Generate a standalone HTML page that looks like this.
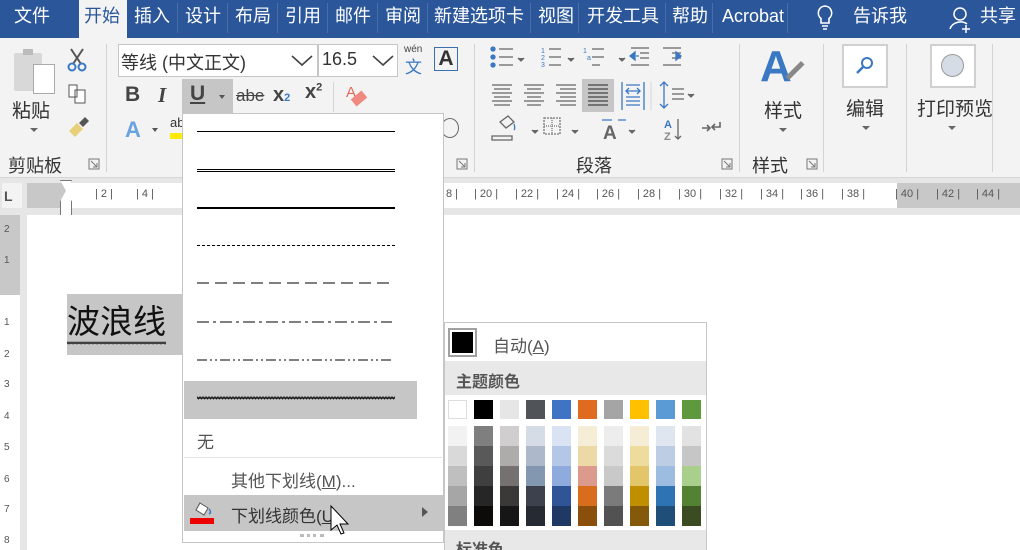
<!DOCTYPE html>
<html style="overflow:hidden;width:1020px;height:550px"><head><meta charset="utf-8"><style>
*{margin:0;padding:0;box-sizing:border-box}
body{width:1020px;height:550px;overflow:hidden;position:relative;background:#e6e6e6;font-family:"Liberation Sans","Noto Sans CJK SC",sans-serif;color:#444}
.a{position:absolute}
.tab{position:absolute;top:0;height:38px;line-height:32px;color:#fff;font-size:18px}
.sep{position:absolute;top:3px;width:1px;height:30px;background:#4a6fa8}
.vs{position:absolute;width:1px;background:#d4d4d4}
.lbl{position:absolute;font-size:18px;color:#333}
.dl{position:absolute;left:197px;width:198px}
.sw{position:absolute;width:19px}
.rn{position:absolute;top:188px;font-size:11px;color:#555}
.vn{position:absolute;left:4px;font-size:10px;color:#555}
</style></head><body>
<svg width="0" height="0" style="position:absolute"><defs><pattern id="wv" width="4" height="6" patternUnits="userSpaceOnUse"><path d="M0 4L1 2 2 4 3 2 4 4" fill="none" stroke="#000" stroke-width="0.8"/></pattern><pattern id="wv2" width="3" height="6" patternUnits="userSpaceOnUse"><path d="M0 4L0.75 2 1.5 4 2.25 2 3 4" fill="none" stroke="#000" stroke-width="0.7"/></pattern></defs></svg>
<!-- title tabs -->
<div class="a" style="left:0;top:0;width:1020px;height:38px;background:#2b579a"></div>
<div class="a" style="left:79px;top:0;width:48px;height:38px;background:#f3f3f3"></div>
<div class="tab" style="left:14px">文件</div>
<div class="tab" style="left:84px;color:#2b579a">开始</div>
<div class="tab" style="left:134px">插入</div>
<div class="tab" style="left:185px">设计</div>
<div class="tab" style="left:235px">布局</div>
<div class="tab" style="left:285px">引用</div>
<div class="tab" style="left:335px">邮件</div>
<div class="tab" style="left:385px">审阅</div>
<div class="tab" style="left:434px">新建选项卡</div>
<div class="tab" style="left:538px">视图</div>
<div class="tab" style="left:587px">开发工具</div>
<div class="tab" style="left:672px">帮助</div>
<div class="tab" style="left:722px">Acrobat</div>
<div class="tab" style="left:853px">告诉我</div>
<div class="tab" style="left:980px">共享</div>
<div class="sep" style="left:177px"></div><div class="sep" style="left:227px"></div><div class="sep" style="left:277px"></div><div class="sep" style="left:327px"></div><div class="sep" style="left:377px"></div><div class="sep" style="left:427px"></div><div class="sep" style="left:530px"></div><div class="sep" style="left:578px"></div><div class="sep" style="left:665px"></div><div class="sep" style="left:712px"></div><div class="sep" style="left:787px"></div>
<svg class="a" style="left:814px;top:3px" width="22" height="30"><path d="M11 3a7 7 0 0 0-4 12.5V20h8v-4.5A7 7 0 0 0 11 3zM8 23h6M9 26h4" fill="none" stroke="#fff" stroke-width="1.6"/></svg>
<svg class="a" style="left:948px;top:5px" width="26" height="28"><circle cx="12" cy="9" r="6" fill="none" stroke="#fff" stroke-width="1.5"/><path d="M2 24c2-7 12-9 17-5M18 20v8M14 24h8" fill="none" stroke="#fff" stroke-width="1.5"/></svg>
<!-- ribbon -->
<div class="a" style="left:0;top:38px;width:1020px;height:140px;background:#f3f3f3"></div>
<div class="a" style="left:0;top:177px;width:1020px;height:1px;background:#d6d6d6"></div>
<div class="vs" style="left:106px;top:44px;height:128px"></div>
<div class="vs" style="left:474px;top:44px;height:128px"></div>
<div class="vs" style="left:739px;top:44px;height:128px"></div>
<div class="vs" style="left:823px;top:44px;height:128px"></div>
<div class="vs" style="left:906px;top:44px;height:128px"></div>
<div class="vs" style="left:992px;top:44px;height:128px"></div>
<!-- clipboard -->
<div class="a" style="left:14px;top:53px;width:28px;height:38px;background:#d8d8d8;border-radius:2px"></div>
<div class="a" style="left:23px;top:49px;width:10px;height:6px;background:#bbb"></div>
<div class="a" style="left:33px;top:64px;width:22px;height:30px;background:#fff;border:1px solid #aaa"></div>
<div class="lbl" style="left:12px;top:96px;font-size:19px">粘贴</div>
<div class="a" style="left:30px;top:128px;border:4px solid transparent;border-top:4px solid #666"></div>
<svg class="a" style="left:65px;top:47px" width="24" height="26"><path d="M6 2l10 15M18 2L8 17" stroke="#555" stroke-width="2"/><circle cx="7" cy="20" r="3.5" fill="none" stroke="#3a78c3" stroke-width="2"/><circle cx="17" cy="20" r="3.5" fill="none" stroke="#3a78c3" stroke-width="2"/></svg>
<svg class="a" style="left:67px;top:83px" width="22" height="22"><path d="M2 2h8v12H2zM8 7h10v13H8z" fill="#fff" stroke="#555"/></svg>
<svg class="a" style="left:65px;top:117px" width="26" height="22"><path d="M4 14l8-8 6 6-8 8z" fill="#e8d07a"/><path d="M14 6l6-6 4 4-6 6" fill="#555"/></svg>
<div class="lbl" style="left:8px;top:152px">剪贴板</div>
<svg class="a" style="left:88px;top:158px" width="12" height="12"><path d="M1 1h10v10H1zM3 3l6 6M9 5v4H5" fill="none" stroke="#777"/></svg>
<!-- font -->
<div class="a" style="left:118px;top:44px;width:200px;height:33px;background:#fff;border:1px solid #c6c6c6"></div>
<div class="a" style="left:121px;top:49px;font-size:18px;color:#333">等线 (中文正文)</div>
<svg class="a" style="left:290px;top:54px" width="24" height="14"><path d="M2 2l10 9 10-9" fill="none" stroke="#444" stroke-width="1.6"/></svg>
<div class="a" style="left:318px;top:44px;width:80px;height:33px;background:#fff;border:1px solid #c6c6c6"></div>
<div class="a" style="left:322px;top:49px;font-size:18px;color:#333">16.5</div>
<svg class="a" style="left:371px;top:54px" width="24" height="14"><path d="M2 2l10 9 10-9" fill="none" stroke="#444" stroke-width="1.6"/></svg>
<div class="a" style="left:404px;top:44px;font-size:10px;color:#444">wén</div>
<div class="a" style="left:405px;top:53px;font-size:17px;color:#3a78c3">文</div>
<div class="a" style="left:434px;top:47px;width:24px;height:24px;border:1px solid #3a6fb0;font-size:21px;font-weight:bold;line-height:22px;text-align:center;color:#333">A</div>
<div class="a" style="left:125px;top:83px;font-size:21px;font-weight:bold;color:#444">B</div>
<div class="a" style="left:158px;top:83px;font-size:21px;font-style:italic;font-family:'Liberation Serif',serif;font-weight:bold;color:#444">I</div>
<div class="a" style="left:182px;top:79px;width:51px;height:34px;background:#c6c6c6"></div>
<div class="a" style="left:190px;top:82px;font-size:21px;font-weight:bold;color:#444;text-decoration:underline">U</div>
<div class="a" style="left:219px;top:95px;border:3px solid transparent;border-top:4px solid #555"></div>
<div class="a" style="left:236px;top:86px;font-size:17px;color:#444;text-decoration:line-through">abe</div>
<div class="a" style="left:273px;top:84px;font-size:20px;font-weight:bold;color:#444">x<span style="font-size:11px;color:#3a78c3">2</span></div>
<div class="a" style="left:305px;top:81px;font-size:20px;font-weight:bold;color:#444">x<sup style="font-size:11px">2</sup></div>
<div class="vs" style="left:333px;top:82px;height:30px"></div>
<div class="a" style="left:346px;top:84px;font-size:15px;color:#e06a5a">A</div>
<div class="a" style="left:352px;top:94px;width:14px;height:9px;background:#f08a80;transform:rotate(-40deg)"></div>
<div class="a" style="left:125px;top:117px;font-size:22px;color:#6aa3dd;font-weight:bold">A</div>
<div class="a" style="left:152px;top:128px;border:3px solid transparent;border-top:4px solid #555"></div>
<div class="a" style="left:170px;top:115px;font-size:13px;color:#333">ab</div>
<div class="a" style="left:170px;top:133px;width:12px;height:6px;background:#ffeb00"></div>
<div class="a" style="left:441px;top:118px;width:18px;height:20px;border:1px solid #666;border-radius:50%"></div>
<svg class="a" style="left:456px;top:158px" width="12" height="12"><path d="M1 1h10v10H1zM3 3l6 6M9 5v4H5" fill="none" stroke="#777"/></svg>
<!-- paragraph -->
<svg class="a" style="left:488px;top:44px" width="250" height="105" fill="none" stroke-width="1.3">
<g stroke="#3a78c3" fill="#3a78c3"><circle cx="5" cy="5" r="2"/><circle cx="5" cy="13" r="2"/><circle cx="5" cy="21" r="2"/></g>
<path d="M11 5h14M11 13h14M11 21h14M61 5h12M61 13h12M61 21h12M104 5h12M104 13h12M104 21h8M143 4h18M152 9h9M152 14h9M143 21h18M175 4h18M184 9h9M184 14h9M175 21h18" stroke="#666"/>
<text x="53" y="9" font-size="7" fill="#3a78c3">1</text><text x="53" y="16" font-size="7" fill="#3a78c3">2</text><text x="53" y="23" font-size="7" fill="#3a78c3">3</text>
<text x="95" y="9" font-size="7" fill="#3a78c3">1</text><text x="99" y="16" font-size="7" fill="#3a78c3">a</text>
<path d="M142 12l5-4v8zM148 12h3M193 12l-5-4v8z" fill="#3a78c3" stroke="#3a78c3"/>
<path d="M30 14l3 3 3-3M80 14l3 3 3-3M131 14l3 3 3-3" fill="#666" stroke="#666"/>
<path d="M4 41h20M6 45h16M4 49h20M6 53h16M4 57h20M6 61h16M36 41h20M39 45h14M36 49h20M39 53h14M36 57h20M39 61h14M68 41h20M72 45h16M68 49h20M72 53h16M68 57h20M72 61h16" stroke="#666"/>
<rect x="94" y="35" width="32" height="33" fill="#c6c6c6" stroke="none"/>
<path d="M100 41h20M100 45h20M100 49h20M100 53h20M100 57h20M100 61h20" stroke="#444"/>
<path d="M134 38v28M156 38v28M138 41h14M138 53h14M138 57h14M138 61h14M138 47h14M141 44l-3 3 3 3M149 44l3 3-3 3" stroke="#3a78c3"/>
<path d="M163 38v28" stroke="#ddd"/>
<path d="M176 38v26M172 42l4-4 4 4M172 60l4 4 4-4" stroke="#3a78c3"/>
<path d="M184 45h12M184 50h12M184 55h12" stroke="#666"/>
<path d="M200 50l3 3 3-3" fill="#666" stroke="#666"/>
<path d="M12 78l8-6 6 6-8 6zM4 92h20v4H4z" stroke="#666"/><path d="M26 80c1 3 1 5 0 6" stroke="#3a78c3"/>
<path d="M44 86l3 3 3-3" fill="#666" stroke="#666"/>
<rect x="56" y="74" width="16" height="16" stroke="#777" stroke-dasharray="2 1"/><path d="M64 74v16M56 82h16" stroke="#777" stroke-dasharray="1 1"/>
<path d="M84 86l3 3 3-3M141 86l3 3 3-3" fill="#666" stroke="#666"/>
<text x="115" y="95" font-size="19" font-weight="bold" fill="#666" stroke="none">A</text><path d="M114 76l10 0M130 76l8 0" stroke="#3a78c3"/>
<text x="176" y="84" font-size="11" font-weight="bold" fill="#3a78c3" stroke="none">A</text><text x="176" y="96" font-size="11" font-weight="bold" fill="#888" stroke="none">Z</text><path d="M190 75v20M187 92l3 3 3-3" stroke="#666"/>
<path d="M214 84h8M219 81l3 3-3 3M232 78v5h-8M227 80l-3 3 3 3" stroke="#666" stroke-width="1.6"/>
</svg>
<div class="lbl" style="left:576px;top:152px">段落</div>
<svg class="a" style="left:721px;top:158px" width="12" height="12"><path d="M1 1h10v10H1zM3 3l6 6M9 5v4H5" fill="none" stroke="#777"/></svg>
<!-- styles -->
<div class="a" style="left:760px;top:44px;font-size:44px;font-weight:bold;color:#3a78c3;line-height:46px">A</div>
<div class="a" style="left:784px;top:68px;width:22px;height:5px;background:#888;transform:rotate(-45deg)"></div>
<div class="lbl" style="left:764px;top:96px;font-size:19px">样式</div>
<div class="a" style="left:779px;top:128px;border:4px solid transparent;border-top:4px solid #666"></div>
<div class="lbl" style="left:752px;top:152px">样式</div>
<svg class="a" style="left:806px;top:158px" width="12" height="12"><path d="M1 1h10v10H1zM3 3l6 6M9 5v4H5" fill="none" stroke="#777"/></svg>
<div class="a" style="left:842px;top:44px;width:46px;height:44px;background:#fff;border:2px solid #d0d0d0"></div>
<svg class="a" style="left:854px;top:54px" width="22" height="22"><circle cx="13" cy="9" r="5" fill="none" stroke="#3a78c3" stroke-width="2"/><path d="M9 13l-6 6" stroke="#3a78c3" stroke-width="2.5"/></svg>
<div class="lbl" style="left:846px;top:94px;font-size:19px">编辑</div>
<div class="a" style="left:862px;top:126px;border:4px solid transparent;border-top:4px solid #666"></div>
<div class="a" style="left:930px;top:44px;width:46px;height:44px;background:#fff;border:2px solid #d0d0d0"></div>
<div class="a" style="left:941px;top:54px;width:23px;height:23px;border-radius:50%;background:#d6dce5;border:1px solid #999"></div>
<div class="lbl" style="left:917px;top:94px;font-size:19px">打印预览</div>
<div class="a" style="left:948px;top:126px;border:4px solid transparent;border-top:4px solid #666"></div>
<!-- ruler -->
<div class="a" style="left:0;top:178px;width:1020px;height:37px;background:#e6e6e6"></div>
<div class="a" style="left:2px;top:183px;width:20px;height:25px;background:#f3f3f3;font-size:14px;font-weight:bold;color:#555;padding:5px 0 0 2px">L</div>
<div class="a" style="left:27px;top:183px;width:993px;height:25px;background:#fff"></div>
<div class="a" style="left:27px;top:183px;width:39px;height:25px;background:#c8c8c8"></div>
<div class="a" style="left:897px;top:183px;width:123px;height:25px;background:#c8c8c8"></div>
<div class="a" style="left:60px;top:180px;width:12px;height:36px;border:1px solid #777;background:#fff;clip-path:polygon(0 0,100% 0,50% 30%,100% 60%,100% 100%,0 100%,0 60%,50% 30%)"></div>
<div class="rn" style="left:95px">| 2 |</div><div class="rn" style="left:136px">| 4 |</div>
<div class="rn" style="left:446px">8 |</div>
<div class="rn" style="left:474px">| 20 |</div><div class="rn" style="left:515px">| 22 |</div><div class="rn" style="left:556px">| 24 |</div><div class="rn" style="left:596px">| 26 |</div><div class="rn" style="left:637px">| 28 |</div><div class="rn" style="left:678px">| 30 |</div><div class="rn" style="left:719px">| 32 |</div><div class="rn" style="left:760px">| 34 |</div><div class="rn" style="left:800px">| 36 |</div><div class="rn" style="left:841px">| 38 |</div><div class="rn" style="left:895px">| 40 |</div><div class="rn" style="left:936px">| 42 |</div><div class="rn" style="left:976px">| 44 |</div>
<!-- document -->
<div class="a" style="left:0;top:215px;width:20px;height:335px;background:#fff"></div>
<div class="a" style="left:0;top:215px;width:20px;height:80px;background:#c8c8c8"></div>
<div class="vn" style="top:224px">2</div><div class="vn" style="top:255px">1</div>
<div class="vn" style="top:317px">1</div><div class="vn" style="top:349px">2</div><div class="vn" style="top:379px">3</div><div class="vn" style="top:411px">4</div><div class="vn" style="top:442px">5</div><div class="vn" style="top:474px">6</div><div class="vn" style="top:504px">7</div><div class="vn" style="top:535px">8</div>
<div class="a" style="left:27px;top:215px;width:993px;height:335px;background:#fff"></div>
<div class="a" style="left:67px;top:294px;width:116px;height:61px;background:#c6c6c6"></div>
<div class="a" style="left:67px;top:302px;font-size:33px;color:#111;line-height:40px">波浪线</div>
<svg class="a" style="left:67px;top:340px" width="99" height="7"><rect width="99" height="7" fill="url(#wv)"/></svg>
<!-- underline menu -->
<div class="a" style="left:182px;top:113px;width:262px;height:430px;background:#fff;border:1px solid #c6c6c6"></div>
<div class="dl" style="top:131px;border-top:1px solid #000"></div>
<div class="dl" style="top:169px;border-top:3px double #000;height:3px"></div>
<div class="dl" style="top:207px;border-top:2px solid #000"></div>
<div class="dl" style="top:245px;border-top:1px dashed #000"></div>
<svg class="a" style="left:197px;top:280px" width="200" height="90"><path d="M0 3h195" stroke="#000" stroke-dasharray="12 6"/><path d="M0 42h195" stroke="#000" stroke-dasharray="12 4 3 4"/><path d="M0 80h195" stroke="#000" stroke-dasharray="10 3 2 3 2 3"/></svg>
<div class="a" style="left:184px;top:381px;width:233px;height:38px;background:#c6c6c6"></div>
<svg class="a" style="left:197px;top:395px" width="198" height="6"><rect width="198" height="6" fill="url(#wv2)"/></svg>
<div class="a" style="left:197px;top:428px;font-size:17px;color:#555">无</div>
<div class="a" style="left:184px;top:457px;width:258px;height:1px;background:#e2e2e2"></div>
<div class="a" style="left:231px;top:467px;font-size:17px;color:#555">其他下划线(<u>M</u>)...</div>
<div class="a" style="left:184px;top:495px;width:259px;height:36px;background:#c6c6c6"></div>
<svg class="a" style="left:192px;top:500px" width="24" height="18"><path d="M8 3l8 5-4 7-8-5z" fill="#fff" stroke="#555"/><path d="M17 9c2 2 2 4 0 5" stroke="#3a78c3" fill="none" stroke-width="1.5"/></svg>
<div class="a" style="left:190px;top:518px;width:24px;height:6px;background:#e00"></div>
<div class="a" style="left:231px;top:502px;font-size:17px;color:#333">下划线颜色(<u>U</u>)</div>
<div class="a" style="left:422px;top:507px;border:5px solid transparent;border-left:6px solid #555"></div>
<div class="a" style="left:300px;top:534px;width:24px;height:3px;border-top:3px dotted #bbb"></div>
<svg class="a" style="left:330px;top:505px" width="20" height="32"><path d="M1 1v24l6-5 4 9 3-1-4-9h8z" fill="#fff" stroke="#000"/></svg>
<!-- color menu -->
<div class="a" style="left:444px;top:322px;width:263px;height:228px;background:#fff;border:1px solid #c6c6c6"></div>
<div class="a" style="left:448px;top:328px;width:29px;height:29px;border:2px solid #a0a0a0;padding:2px"><div style="width:100%;height:100%;background:#000"></div></div>
<div class="a" style="left:493px;top:332px;font-size:17px;color:#555">自动(<u>A</u>)</div>
<div class="a" style="left:445px;top:361px;width:261px;height:34px;background:#e8e8e8"></div>
<div class="a" style="left:456px;top:368px;font-size:16px;font-weight:bold;color:#555">主题颜色</div>
<div class="a" style="left:445px;top:530px;width:261px;height:20px;background:#e8e8e8"></div>
<div class="a" style="left:456px;top:536px;font-size:16px;font-weight:bold;color:#555">标准色</div>
<div id="sw"></div>
<script>
var cols=[["#fff","#f2f2f2","#d9d9d9","#bfbfbf","#a6a6a6","#808080"],["#000","#7f7f7f","#595959","#3f3f3f","#262626","#0d0a0a"],["#e7e6e6","#d0cece","#aeabab","#757171","#3b3838","#171616"],["#505458","#d6dce5","#adb9ca","#8497b0","#3c414d","#262a33"],["#3f73c4","#dae3f3","#b4c7e7","#8faadc","#2f5597","#203864"],["#de6b1f","#f5edd6","#edd9a5","#dc9a8c","#d86d1e","#8a4f0a"],["#a5a5a5","#ededed","#dbdbdb","#c9c9c9","#7b7b7b","#525252"],["#ffc000","#f5edd6","#eedc9c","#e4c66a","#bf8f00","#845a0a"],["#5b9bd5","#e0e6ef","#bdcde4","#9dbde0","#2e74b5","#1f4e79"],["#5f993e","#e2e2e2","#c6c6c6","#a9cf8d","#548235","#3b4b22"]];
var h="";for(var i=0;i<10;i++){var x=448+i*26;var c=cols[i];h+='<div class="sw" style="left:'+x+'px;top:400px;height:19px;background:'+c[0]+';'+(i==0?'border:1px solid #ddd':'')+'"></div>';for(var j=1;j<6;j++)h+='<div class="sw" style="left:'+x+'px;top:'+(426+(j-1)*20)+'px;height:20px;background:'+c[j]+'"></div>';}
document.getElementById("sw").innerHTML=h;
</script>
</body></html>
